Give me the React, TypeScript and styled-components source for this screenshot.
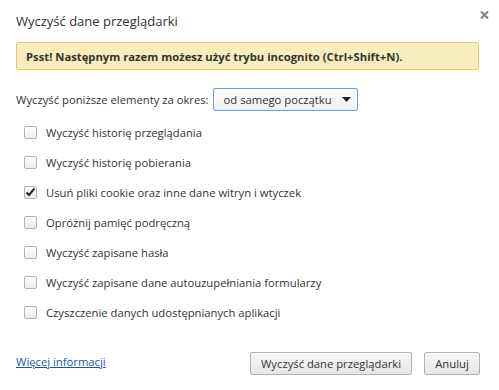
import styled, { createGlobalStyle } from 'styled-components';

const GlobalStyle = createGlobalStyle`
  body {
    margin: 0;
    background: #ffffff;
    font-family: "Open Sans", "Liberation Sans", sans-serif;
    color: #333333;
  }
`;

const Dialog = styled.div`
  width: 499px;
  height: 390px;
  box-sizing: border-box;
  padding: 0 19px 0 16px;
  display: flex;
  flex-direction: column;
  font-size: 11.25px;
`;

const Header = styled.div`
  display: flex;
  justify-content: space-between;
  align-items: flex-start;
  padding-top: 12px;
  margin-right: -10px;
`;

const Title = styled.h1`
  margin: 0;
  font-size: 13px;
  font-weight: normal;
  line-height: 19px;
  color: #333333;
`;

const CloseButton = styled.button`
  border: 0;
  background: none;
  padding: 0;
  margin-top: -2px;
  margin-right: 1px;
  width: 10px;
  height: 10px;
  display: flex;
  align-items: center;
  justify-content: center;
  cursor: pointer;
`;

const Banner = styled.div`
  margin-top: 11px;
  margin-right: 1px;
  height: 28px;
  box-sizing: border-box;
  display: flex;
  align-items: center;
  padding: 0 9px;
  background: #f9edbe;
  border: 1px solid #f0c36d;
  border-radius: 2px;
  font-weight: bold;
  color: #333333;
`;

const PeriodRow = styled.div`
  display: flex;
  align-items: center;
  gap: 4px;
  margin-top: 18px;
`;

const Select = styled.div`
  height: 23px;
  width: 145px;
  box-sizing: border-box;
  display: flex;
  align-items: center;
  justify-content: space-between;
  padding: 0 6px 0 10px;
  border: 1px solid #6d9fd8;
  border-radius: 2px;
  background: linear-gradient(#fdfdfd, #f1f1f1);
  color: #333333;
`;

const OptionList = styled.div`
  display: flex;
  flex-direction: column;
  margin-top: 6px;
  padding-left: 8px;
`;

const OptionRow = styled.label`
  height: 30px;
  display: flex;
  align-items: center;
  gap: 9px;
`;

const Box = styled.span`
  width: 13px;
  height: 13px;
  box-sizing: border-box;
  border: 1px solid #b2b2b2;
  border-radius: 2px;
  background: linear-gradient(#ffffff, #ebebeb);
  display: flex;
  align-items: center;
  justify-content: center;
  flex-shrink: 0;
`;

const Footer = styled.div`
  display: flex;
  align-items: center;
  justify-content: space-between;
  margin-top: 25px;
`;

const Link = styled.a`
  color: #1155cc;
  text-decoration: underline;
  margin-top: -5px;
`;

const Actions = styled.div`
  display: flex;
  gap: 12px;
`;

const Button = styled.button`
  height: 23px;
  padding: 0 10px;
  border: 1px solid #b3b3b3;
  border-radius: 2px;
  background: linear-gradient(#f7f7f7, #e6e6e6);
  font-family: inherit;
  font-size: 11.25px;
  color: #333333;
  min-width: ${(p: { $wide?: boolean }) => (p.$wide ? '162px' : '56px')};
`;

const options = [
  { label: 'Wyczyść historię przeglądania', checked: false },
  { label: 'Wyczyść historię pobierania', checked: false },
  { label: 'Usuń pliki cookie oraz inne dane witryn i wtyczek', checked: true },
  { label: 'Opróżnij pamięć podręczną', checked: false },
  { label: 'Wyczyść zapisane hasła', checked: false },
  { label: 'Wyczyść zapisane dane autouzupełniania formularzy', checked: false },
  { label: 'Czyszczenie danych udostępnianych aplikacji', checked: false },
];

export default function App() {
  return (
    <Dialog>
      <GlobalStyle />
      <Header>
        <Title>Wyczyść dane przeglądarki</Title>
        <CloseButton aria-label="Zamknij">
          <svg width="9" height="8" viewBox="0 0 9 8">
            <path d="M1 0.5 L8 7.5 M8 0.5 L1 7.5" stroke="#808080" strokeWidth="2" />
          </svg>
        </CloseButton>
      </Header>
      <Banner>Psst! Następnym razem możesz użyć trybu incognito (Ctrl+Shift+N).</Banner>
      <PeriodRow>
        <span>Wyczyść poniższe elementy za okres:</span>
        <Select>
          <span>od samego początku</span>
          <svg width="9" height="5" viewBox="0 0 9 5">
            <path d="M0 0 H9 L4.5 5 Z" fill="#222222" />
          </svg>
        </Select>
      </PeriodRow>
      <OptionList>
        {options.map((o) => (
          <OptionRow key={o.label}>
            <Box>
              {o.checked && (
                <svg width="11" height="10" viewBox="0 0 11 10">
                  <path d="M1.5 5.5 L4 8 L9.5 1.5" stroke="#2a2a2a" strokeWidth="2.2" fill="none" />
                </svg>
              )}
            </Box>
            <span>{o.label}</span>
          </OptionRow>
        ))}
      </OptionList>
      <Footer>
        <Link href="#">Więcej informacji</Link>
        <Actions>
          <Button $wide>Wyczyść dane przeglądarki</Button>
          <Button>Anuluj</Button>
        </Actions>
      </Footer>
    </Dialog>
  );
}
